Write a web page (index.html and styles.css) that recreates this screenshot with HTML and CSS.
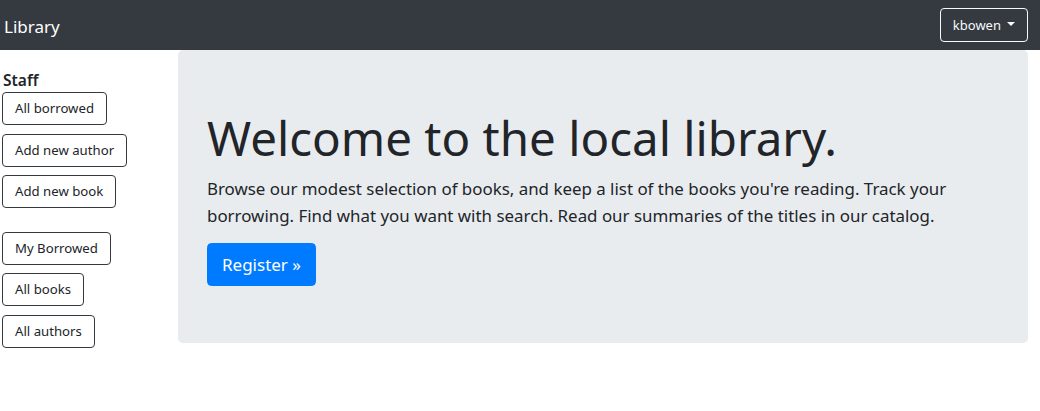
FILE: index.html
```html
<!DOCTYPE html>
<html lang="en">
<head>
<meta charset="utf-8">
<title>Local Library</title>
<link rel="stylesheet" href="styles.css">
</head>
<body>
<nav class="navbar">
  <a class="brand" href="#">Library</a>
  <button class="user-btn" type="button">kbowen<span class="caret"></span></button>
</nav>
<div class="main">
  <aside class="sidebar">
    <div class="side-title">Staff</div>
    <div class="group">
      <a class="side-btn" href="#">All borrowed</a>
      <a class="side-btn" href="#">Add new author</a>
      <a class="side-btn" href="#">Add new book</a>
    </div>
    <div class="group group-second">
      <a class="side-btn" href="#">My Borrowed</a>
      <a class="side-btn" href="#">All books</a>
      <a class="side-btn" href="#">All authors</a>
    </div>
  </aside>
  <section class="jumbotron">
    <h1 class="display">Welcome to the local library.</h1>
    <p class="lead">Browse our modest selection of books, and keep a list of the books you're reading. Track your borrowing. Find what you want with search. Read our summaries of the titles in our catalog.</p>
    <a class="register-btn" href="#">Register »</a>
  </section>
</div>
</body>
</html>
```
FILE: styles.css
```css
* { box-sizing: border-box; }
html, body { margin: 0; padding: 0; }
body {
  font-family: "Noto Sans", "DejaVu Sans", sans-serif;
  font-size: 16px;
  line-height: 1.5;
  color: #212529;
  background: #fff;
}
a { text-decoration: none; }

.navbar {
  height: 50px;
  background: #343a40;
  display: flex;
  align-items: center;
  justify-content: space-between;
  padding: 0 12px 0 4px;
}
.brand {
  color: #fff;
  font-size: 17px;
  line-height: 30px;
  padding-top: 3px;
}
.user-btn {
  font-family: inherit;
  font-size: 13px;
  line-height: 21px;
  padding: 5.5px 12px;
  color: #f8f9fa;
  background: transparent;
  border: 1px solid #f8f9fa;
  border-radius: 4px;
  display: inline-flex;
  align-items: center;
}
.caret {
  display: inline-block;
  width: 0;
  height: 0;
  margin-left: 6px;
  border-top: 4.5px solid #f8f9fa;
  border-left: 4.5px solid transparent;
  border-right: 4.5px solid transparent;
  position: relative;
  top: -1px;
}

.main {
  display: flex;
  align-items: flex-start;
}
.sidebar {
  width: 178px;
  flex: none;
  padding: 19px 0 0 2px;
}
.side-title {
  font-weight: 600;
  font-size: 15.5px;
  line-height: 23px;
  margin-left: 1px;
}
.group {
  display: flex;
  flex-direction: column;
  align-items: flex-start;
  gap: 8.5px;
}
.group-second { margin-top: 23.5px; }
.side-btn {
  display: inline-block;
  font-size: 13.2px;
  line-height: 21px;
  padding: 5px 12px;
  color: #212529;
  border: 1px solid #343a40;
  border-radius: 4px;
}

.jumbotron {
  width: 850px;
  flex: none;
  background: #e9ecef;
  border-radius: 4.8px;
  padding: 54px 29px 57px 29px;
}
.display {
  font-size: 47.5px;
  line-height: 67.2px;
  font-weight: 400;
  margin: 0 0 3.7px;
}
.lead {
  font-size: 16.9px;
  line-height: 27px;
  margin: 0 0 13.8px;
}
.register-btn {
  display: inline-block;
  font-size: 17px;
  line-height: 27px;
  padding: 7px 14px;
  color: #fff;
  background: #007bff;
  border: 1px solid #007bff;
  border-radius: 4.5px;
}
```
